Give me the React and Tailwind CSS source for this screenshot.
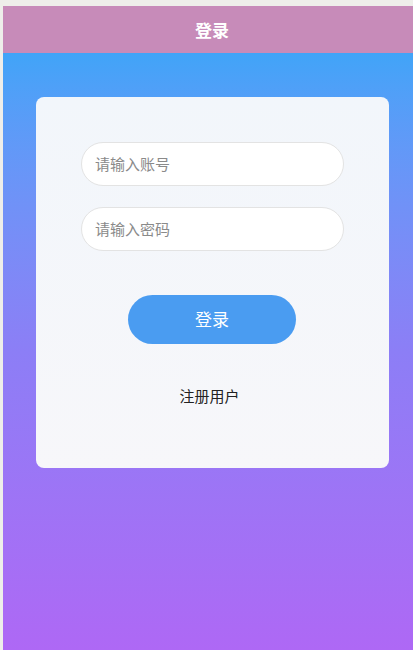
import React from "react";

const font = { fontFamily: '"Noto Sans CJK SC", "Noto Sans", sans-serif' };

export default function App() {
  return (
    <div
      className="w-[413px] h-[650px] bg-[#eeeeea] pt-[6px] pl-[3px] flex flex-col overflow-hidden"
      style={font}
    >
      {/* Header */}
      <div className="h-[47px] shrink-0 bg-[#c78bb9] flex items-center justify-center pl-[8px]">
        <span className="text-white text-[17px] font-bold">登录</span>
      </div>

      {/* Gradient body */}
      <div className="flex-1 bg-gradient-to-b from-[#40a4f8] via-[#8c7ef6] to-[#ae68f5] pt-[44px] pl-[33px]">
        <div className="w-[353px] h-[371px] rounded-lg bg-gradient-to-b from-[#f2f6fb] to-[#f7f7fa] pt-[45px] flex flex-col">
          <div className="pl-[45px] flex flex-col gap-[21px]">
            <input
              type="text"
              placeholder="请输入账号"
              className="w-[263px] h-[44px] rounded-full border border-[#e3e3e3] bg-white pl-[13px] pr-[14px] pb-[2px] text-[15px] text-gray-700 placeholder-[#8a8a8a] outline-none"
            />
            <input
              type="password"
              placeholder="请输入密码"
              className="w-[263px] h-[44px] rounded-full border border-[#e3e3e3] bg-white pl-[13px] pr-[14px] pb-[2px] text-[15px] text-gray-700 placeholder-[#8a8a8a] outline-none"
            />
          </div>
          <div className="pl-[92px] mt-[44px]">
            <button className="w-[168px] h-[49px] rounded-full bg-[#4a9cf1] text-white text-[17px] pb-[2px]">
              登录
            </button>
          </div>
          <div className="mt-[41px] text-center text-[15px] text-[#222] leading-[22px] pr-[6px]">
            注册用户
          </div>
        </div>
      </div>
    </div>
  );
}
